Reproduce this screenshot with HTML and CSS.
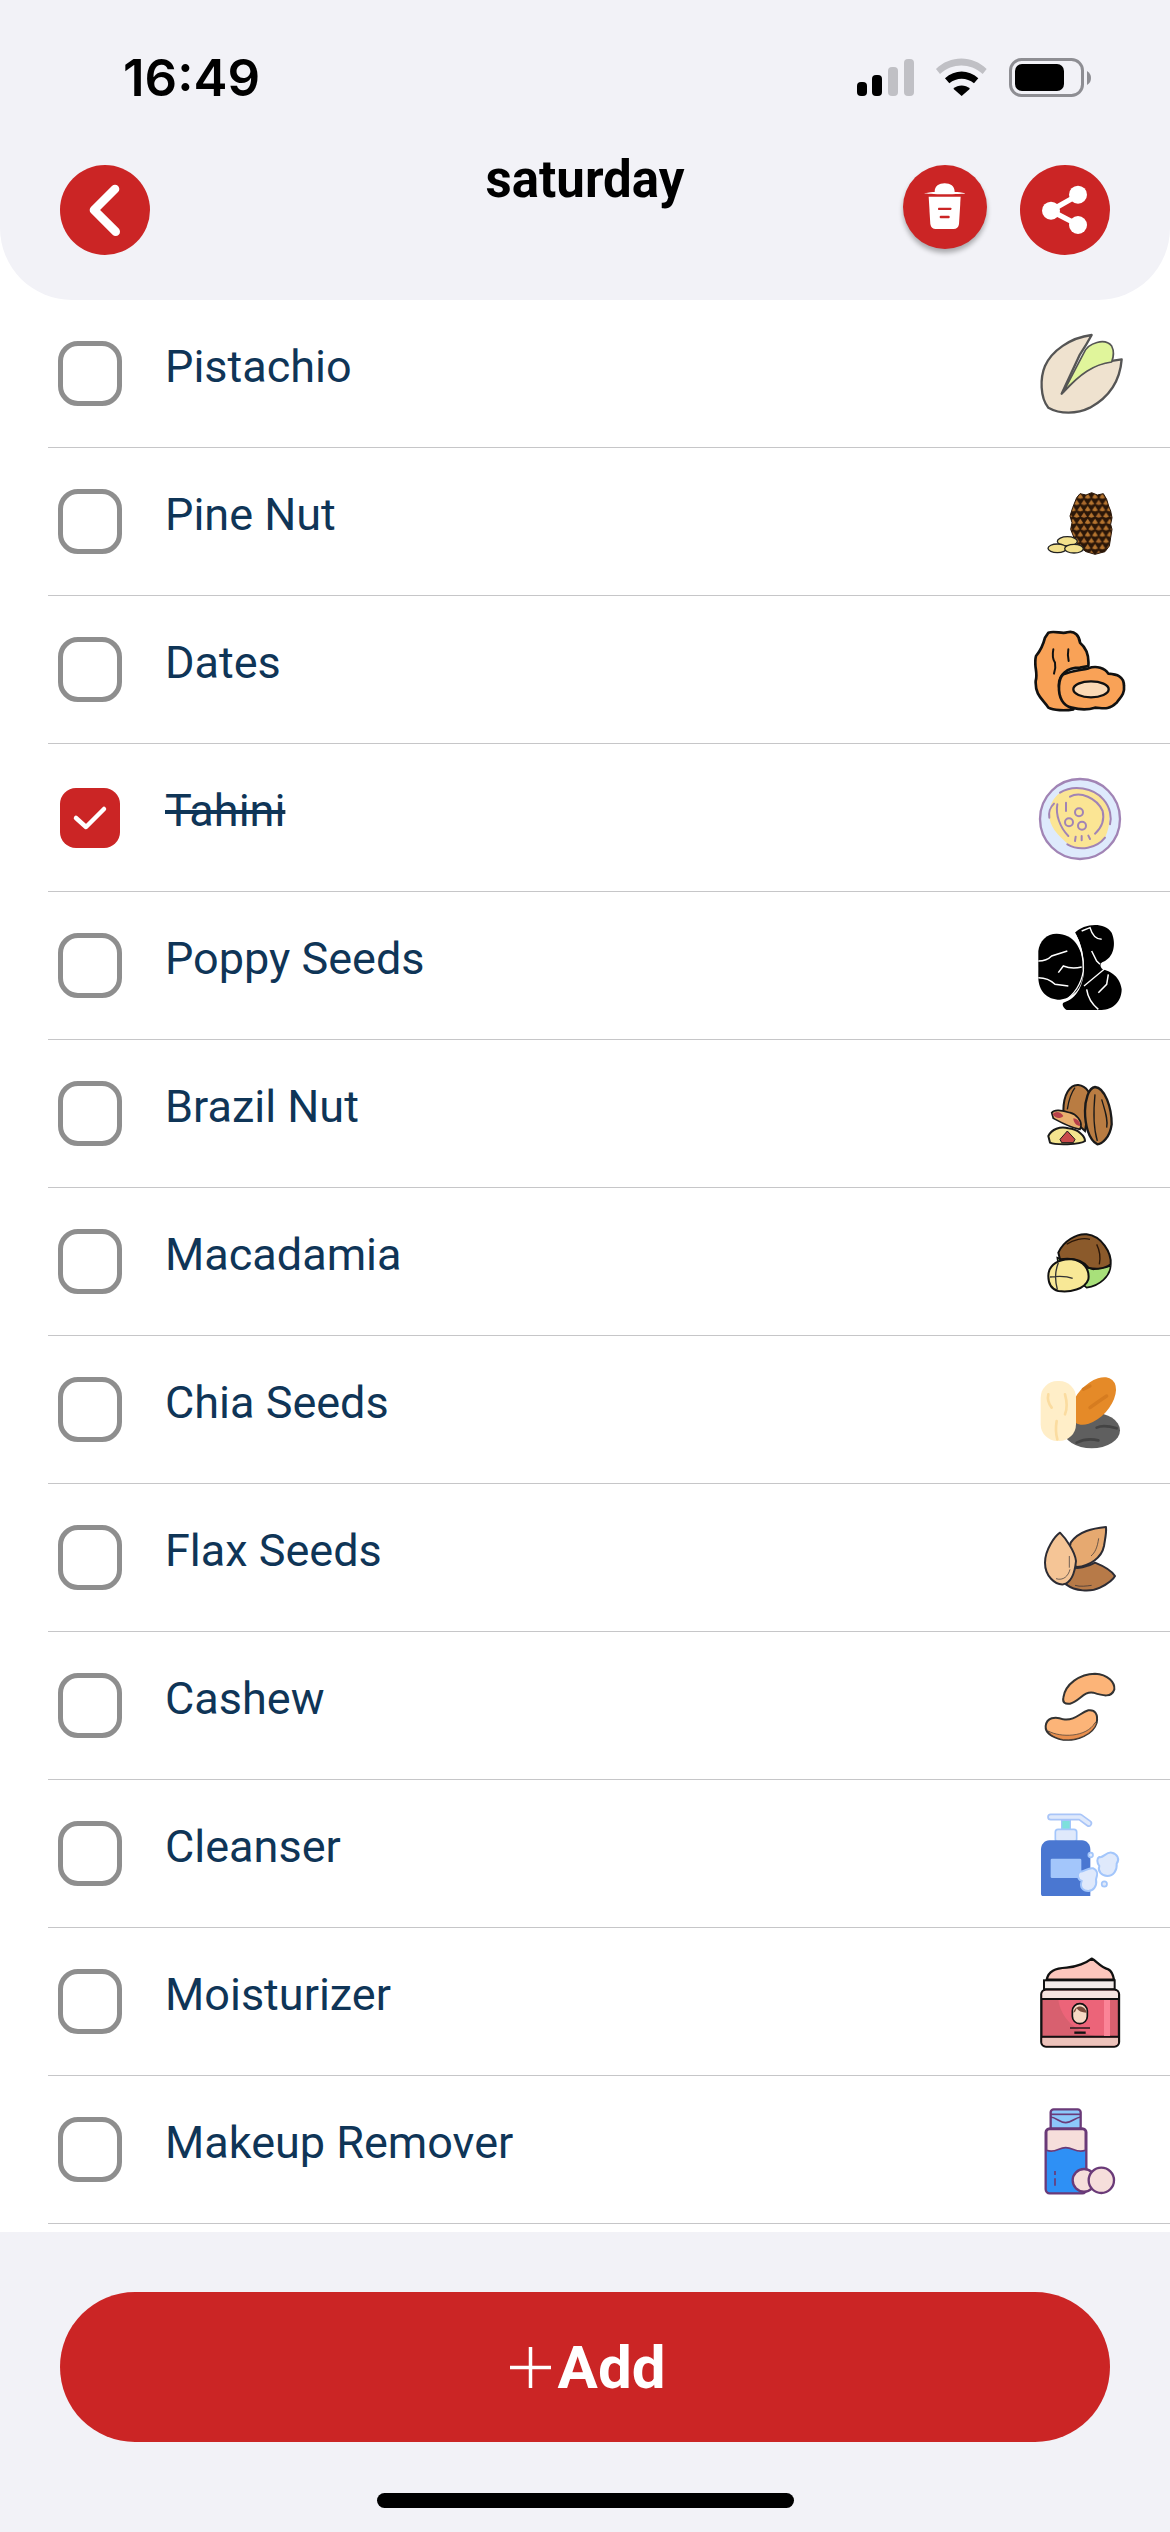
FILE: index.html
```html
<!DOCTYPE html>
<html lang="en">
<head>
<meta charset="utf-8">
<title>saturday</title>
<link rel="stylesheet" href="styles.css">
</head>
<body>
<div class="page">
  <header class="top">
    <div class="status">
      <span class="time">16:49</span>
      <svg class="status-icons" viewBox="850 57 245 42">
        <rect x="857" y="82" width="10" height="14" rx="4" fill="#000"/>
        <rect x="872" y="75" width="10" height="21" rx="4" fill="#000"/>
        <rect x="888" y="67" width="10" height="29" rx="4" fill="#c0c0c5"/>
        <rect x="904" y="59" width="10" height="37" rx="4" fill="#c0c0c5"/>
        <g transform="translate(880 40) scale(.3333)">
          <path d="M168 87C210 45 278 45 320 87L308 102C270 68 218 68 180 102Z" fill="#c0c0c5"/>
          <path d="M195 115C225 88 265 88 295 115L282 130C260 112 230 112 208 130Z" fill="#000"/>
          <path d="M220 146C235 133 255 133 270 146L245 168Z" fill="#000"/>
        </g>
        <rect x="1010.5" y="59.5" width="72" height="36" rx="11" fill="none" stroke="#8e8e93" stroke-width="3"/>
        <rect x="1015" y="64" width="49" height="27" rx="7" fill="#000"/>
        <path d="M1087 71C1090 73 1091 75 1091 78C1091 81 1090 83 1087 85Z" fill="#8e8e93"/>
      </svg>
    </div>
    <div class="nav">
      <button class="round back">
        <svg class="round-icon" viewBox="90 75 270 270"><path d="M255 147L192 210L257 275" fill="none" stroke="#fff" stroke-width="26" stroke-linecap="round" stroke-linejoin="round"/></svg>
      </button>
      <h1 class="title">saturday</h1>
      <div class="actions">
        <button class="round trash">
          <svg class="round-icon" viewBox="70 375 252 252">
            <path d="M134 460C150 457 158 456 165 456C165 438 178 430 195 430C212 430 225 438 225 456C235 456 245 457 257 460C257 464 134 464 134 460Z" fill="#fff"/>
            <path d="M147 470H243L238 552C237 562 230 567 222 567H168C160 567 153 562 152 552Z" fill="#fff"/>
            <rect x="175" y="503" width="40" height="7" rx="2" fill="#cb2525"/>
            <rect x="180" y="527" width="30" height="8" rx="3" fill="#cb2525"/>
          </svg>
        </button>
        <button class="round share">
          <svg class="round-icon" viewBox="420 375 270 270">
            <path d="M595 465L512 512L595 555" fill="none" stroke="#fff" stroke-width="16"/>
            <circle cx="594" cy="464" r="27" fill="#fff"/>
            <circle cx="513" cy="512" r="27" fill="#fff"/>
            <circle cx="594" cy="555" r="27" fill="#fff"/>
          </svg>
        </button>
      </div>
    </div>
  </header>

  <ul class="list">
    <li class="row">
      <span class="box"></span><span class="label">Pistachio</span>
      <svg class="thumb" viewBox="162 45 288 288">
        <path d="M245 248L300 130Q320 100 335 72C270 80 215 120 195 165C180 200 180 260 205 290C240 310 290 310 330 290C385 260 420 210 425 145C380 150 330 165 300 190Z" fill="#efe2cf" stroke="#555" stroke-width="7" stroke-linejoin="round"/>
        <path d="M250 243L312 125C325 95 375 80 395 105C405 125 400 140 395 153C340 160 300 190 250 243Z" fill="#e0f59b" stroke="#555" stroke-width="5" stroke-linejoin="round"/>
      </svg>
    </li>
    <li class="row">
      <span class="box"></span><span class="label">Pine Nut</span>
      <svg class="thumb" viewBox="162 489 288 288">
        <defs>
          <pattern id="cone" x="268" y="545" width="44" height="38" patternUnits="userSpaceOnUse">
            <rect width="44" height="38" fill="#2a1608"/>
            <path d="M2 15L11 2L20 15L11 18Z" fill="#b5742f"/>
            <path d="M24 15L33 2L42 15L33 18Z" fill="#b5742f"/>
            <path d="M-9 34L0 21L9 34L0 37Z" fill="#a8682c"/>
            <path d="M13 34L22 21L31 34L22 37Z" fill="#b5742f"/>
            <path d="M35 34L44 21L53 34L44 37Z" fill="#a8682c"/>
          </pattern>
        </defs>
        <path d="M290 560L300 548L318 552L335 545L352 552L370 548L380 565L386 585L392 600L396 620L392 640L396 655L392 680L388 705L375 722L345 730L318 722L295 705L282 680L272 655L276 635L270 615L278 590Z" fill="url(#cone)" stroke="#2a1608" stroke-width="3"/>
        <ellipse cx="262" cy="691" rx="30" ry="14" fill="#f2e08c" stroke="#222" stroke-width="4"/>
        <ellipse cx="232" cy="712" rx="28" ry="13" fill="#f2e08c" stroke="#222" stroke-width="4"/>
        <ellipse cx="282" cy="713" rx="28" ry="13" fill="#f2e08c" stroke="#222" stroke-width="4"/>
      </svg>
    </li>
    <li class="row">
      <span class="box"></span><span class="label">Dates</span>
      <svg class="thumb" viewBox="162 33 288 288">
        <path d="M205 65C225 58 245 70 262 64C285 58 298 75 300 95C318 110 328 130 325 165L300 170C262 170 235 190 237 225C240 260 255 280 280 295C255 300 220 298 205 290C190 265 165 255 167 210C175 185 160 165 168 135C185 115 190 100 195 80Z" fill="#f9a257" stroke="#111" stroke-width="8" stroke-linejoin="round"/>
        <path d="M250 190C275 180 300 178 325 172C350 162 375 172 385 188C410 190 432 195 432 225C435 250 420 260 410 275C385 300 365 290 345 290C320 298 295 295 275 290C250 285 235 260 237 225C238 210 240 198 250 190Z" fill="#f9a257" stroke="#111" stroke-width="8" stroke-linejoin="round"/>
        <ellipse cx="333" cy="235" rx="53" ry="24" fill="#fbd9b5" stroke="#111" stroke-width="7"/>
        <path d="M220 115Q215 140 225 155Q228 170 222 188M265 115Q262 130 266 150" fill="none" stroke="#111" stroke-width="6" stroke-linecap="round"/>
      </svg>
    </li>
    <li class="row done">
      <span class="box">
        <svg class="tick" viewBox="0 0 60 60"><path d="M16 30L26 39L44 21" fill="none" stroke="#fff" stroke-width="4.5" stroke-linecap="round" stroke-linejoin="round"/></svg>
      </span><span class="label">Tahini</span>
      <svg class="thumb" viewBox="162 477 288 288">
        <circle cx="300" cy="624" r="120" fill="#deeafc" stroke="#a184b5" stroke-width="7"/>
        <path d="M240 545C280 520 340 530 370 565C392 590 395 640 375 680C350 715 300 720 265 700C245 680 215 660 208 620C205 585 220 560 240 545Z" fill="#fbe594"/>
        <path d="M208 620C205 600 210 590 222 578M232 580C226 610 240 650 265 675M262 700C300 722 350 712 375 680M270 557C300 540 350 560 368 600C375 630 365 650 345 668M240 545C280 520 340 530 370 565C392 590 395 620 390 640M258 575V600M287 677L285 690M305 675V688M325 674L330 684" fill="none" stroke="#a184b5" stroke-width="6" stroke-linecap="round"/>
        <circle cx="297" cy="604" r="12" fill="none" stroke="#a184b5" stroke-width="6"/>
        <circle cx="267" cy="634" r="12" fill="none" stroke="#a184b5" stroke-width="6"/>
        <circle cx="306" cy="644" r="12" fill="none" stroke="#a184b5" stroke-width="6"/>
      </svg>
    </li>
    <li class="row">
      <span class="box"></span><span class="label">Poppy Seeds</span>
      <svg class="thumb" viewBox="162 921 288 288">
        <path d="M230 968C280 968 305 1010 310 1060C315 1110 295 1160 240 1166C200 1166 176 1140 175 1100V1020C178 990 200 968 230 968Z" fill="#000"/>
        <path d="M285 965C310 940 370 930 395 965C410 1000 400 1040 370 1052C360 1055 358 1065 368 1075C380 1078 420 1090 425 1135C425 1170 400 1197 365 1197H260C250 1190 245 1180 250 1175C290 1165 315 1120 312 1060C310 1020 300 990 285 965Z" fill="#000"/>
        <path d="M285 968Q312 1020 310 1080Q300 1140 250 1172M312 1125L388 1062" fill="none" stroke="#fff" stroke-width="4"/>
        <path d="M175 1050Q200 1050 215 1035L262 1020M235 1085L250 1065Q275 1075 305 1068M175 1100Q205 1100 225 1120L265 1125M305 960L330 950Q340 985 365 985M335 1020L350 1050L360 1060M320 1135Q325 1170 355 1195M385 1090L380 1120L355 1145" fill="none" stroke="#fff" stroke-width="4.5"/>
      </svg>
    </li>
    <li class="row">
      <span class="box"></span><span class="label">Brazil Nut</span>
      <svg class="thumb" viewBox="162 105 288 288">
        <path d="M250 240C250 190 270 160 295 162C320 165 335 190 330 210L315 300Z" fill="#b97c42" stroke="#1a1a1a" stroke-width="6"/>
        <path d="M345 168C375 170 395 230 395 280C390 320 365 340 352 340C325 325 315 280 315 240C315 210 325 170 345 168Z" fill="#b97c42" stroke="#1a1a1a" stroke-width="7"/>
        <path d="M345 190C340 240 340 290 352 330M365 205C375 240 385 265 380 290M285 170C270 190 265 215 262 235" fill="none" stroke="#1a1a1a" stroke-width="4"/>
        <path d="M215 245C225 232 250 240 270 245C290 250 305 270 303 285L300 295C270 290 235 270 220 262Z" fill="#e9b06e" stroke="#1a1a1a" stroke-width="5"/>
        <path d="M218 250C228 236 245 245 250 255C240 265 225 262 218 250ZM280 262C292 262 302 275 300 285C290 285 280 275 280 262Z" fill="#b8404a"/>
        <path d="M205 315C215 295 240 285 265 292C295 295 315 315 315 330C300 342 225 342 210 335Z" fill="#f4e48e" stroke="#1a1a1a" stroke-width="6"/>
        <path d="M240 325L262 300L285 325L280 335H245Z" fill="#c84a4a" stroke="#1a1a1a" stroke-width="3"/>
      </svg>
    </li>
    <li class="row">
      <span class="box"></span><span class="label">Macadamia</span>
      <svg class="thumb" viewBox="162 549 288 288">
        <path d="M232 680L235 700L320 770C360 765 390 735 392 705L340 715Z" fill="#a8e07a" stroke="#111" stroke-width="5"/>
        <path d="M235 665C250 630 290 607 320 610C365 615 395 665 392 700C375 715 345 715 325 710C310 690 280 680 240 685Z" fill="#8b5a2b" stroke="#111" stroke-width="6"/>
        <path d="M260 640C280 625 310 620 330 625M350 640C360 660 362 680 358 700" fill="none" stroke="#2a1608" stroke-width="4"/>
        <path d="M205 735C205 700 240 682 275 685C310 690 330 715 325 745C315 775 270 785 235 780C215 775 205 760 205 735Z" fill="#f8e896" stroke="#111" stroke-width="6"/>
        <path d="M235 695C225 720 225 750 232 775M210 738C235 735 260 735 278 742" fill="none" stroke="#333" stroke-width="4"/>
      </svg>
    </li>
    <li class="row">
      <span class="box"></span><span class="label">Chia Seeds</span>
      <svg class="thumb" viewBox="162 993 288 288">
        <ellipse cx="335" cy="1198" rx="85" ry="54" fill="#5f5f5f"/>
        <path d="M350 1190Q370 1180 410 1192M290 1235Q320 1220 355 1228" fill="none" stroke="#444" stroke-width="8" stroke-linecap="round"/>
        <ellipse cx="340" cy="1110" rx="50" ry="85" fill="#e58a28" transform="rotate(42 340 1110)"/>
        <path d="M310 1075L330 1065M330 1130Q350 1115 380 1095" fill="none" stroke="#d67c20" stroke-width="10" stroke-linecap="round"/>
        <rect x="182" y="1050" width="106" height="180" rx="50" fill="#ffeec8"/>
        <path d="M205 1090Q200 1110 215 1130M255 1090Q265 1125 255 1150M230 1170Q225 1200 232 1225" fill="none" stroke="#fbdca0" stroke-width="8" stroke-linecap="round"/>
      </svg>
    </li>
    <li class="row">
      <span class="box"></span><span class="label">Flax Seeds</span>
      <svg class="thumb" viewBox="162 177 288 288">
        <path d="M378 228C340 232 295 240 272 275C265 305 265 335 290 348C330 345 365 320 372 285C375 265 380 245 378 228Z" fill="#e6a970" stroke="#2c2c34" stroke-width="6" stroke-linejoin="round"/>
        <path d="M345 335C320 350 290 352 285 350L258 400C285 420 330 425 360 410C380 400 400 385 405 375C395 360 370 345 345 335Z" fill="#b77a48" stroke="#2c2c34" stroke-width="6" stroke-linejoin="round"/>
        <path d="M240 245C225 255 195 295 195 335C195 375 225 402 250 400C275 395 285 360 288 330C285 300 255 260 240 245Z" fill="#f5c596" stroke="#2c2c34" stroke-width="6" stroke-linejoin="round"/>
        <path d="M268 315V350M228 383C250 390 265 375 270 355M285 403C300 408 320 405 335 403M333 315C345 305 352 290 356 262" fill="none" stroke="#2c2c34" stroke-width="2"/>
      </svg>
    </li>
    <li class="row">
      <span class="box"></span><span class="label">Cashew</span>
      <svg class="thumb" viewBox="162 621 288 288">
        <path d="M250 740C255 700 300 668 345 668C385 670 405 695 403 715C395 740 370 735 340 725C310 720 300 750 270 758C255 760 247 755 250 740Z" fill="#fcb478" stroke="#333" stroke-width="6"/>
        <path d="M197 825C200 800 225 795 250 805C285 810 300 785 325 778C345 775 355 790 350 815C340 850 290 870 250 866C220 860 195 850 197 825Z" fill="#fcb478" stroke="#333" stroke-width="6"/>
        <path d="M205 840C240 860 320 860 345 815L350 815C340 850 290 870 250 866C225 860 210 852 205 840Z" fill="#e88f4e" stroke="#333" stroke-width="2"/>
      </svg>
    </li>
    <li class="row">
      <span class="box"></span><span class="label">Cleanser</span>
      <svg class="thumb" viewBox="162 75 288 288">
        <path d="M212 108H300L326 127" fill="none" stroke="#a9c5f8" stroke-width="21" stroke-linecap="round" stroke-linejoin="round"/>
        <path d="M212 108H300L326 127" fill="none" stroke="#dfe9fb" stroke-width="11" stroke-linecap="round" stroke-linejoin="round"/>
        <rect x="245" y="118" width="26" height="30" fill="#7de0dc" stroke="#a3c6fb" stroke-width="4"/>
        <rect x="226" y="145" width="64" height="38" rx="8" fill="#dfe9fb" stroke="#a3c6fb" stroke-width="5"/>
        <path d="M208 178H306C320 178 331 190 331 205V345H190C185 345 183 343 183 338V205C183 190 194 178 208 178Z" fill="#4a77d1"/>
        <rect x="212" y="233" width="92" height="58" rx="4" fill="#a3c6fb"/>
        <circle cx="332" cy="222" r="7" fill="#dfe9fb" stroke="#a3c6fb" stroke-width="5"/>
        <circle cx="373" cy="309" r="8" fill="#dfe9fb" stroke="#a3c6fb" stroke-width="5"/>
        <path d="M300 272C315 272 325 258 340 262C355 268 352 285 348 295C352 315 340 330 325 330C310 330 298 320 305 300C292 295 290 278 300 272Z" fill="#dfe9fb" stroke="#a3c6fb" stroke-width="6"/>
        <path d="M358 228C370 232 378 212 395 215C412 218 420 235 410 248C412 268 400 285 382 285C365 285 352 270 358 255C350 245 350 232 358 228Z" fill="#dfe9fb" stroke="#a3c6fb" stroke-width="6"/>
      </svg>
    </li>
    <li class="row">
      <span class="box"></span><span class="label">Moisturizer</span>
      <svg class="thumb" viewBox="162 519 288 288">
        <path d="M200 596C205 570 225 562 260 560C290 558 320 545 335 533C350 540 360 558 385 565C395 570 400 585 402 596Z" fill="#fcc6bd" stroke="#111" stroke-width="7" stroke-linejoin="round"/>
        <rect x="192" y="598" width="212" height="27" fill="#f3ecea" stroke="#111" stroke-width="6"/>
        <rect x="184" y="626" width="233" height="171" rx="14" fill="#d8606f" stroke="#111" stroke-width="7"/>
        <path d="M187 652V640C187 632 192 629 198 629H403C409 629 414 632 414 640V652Z" fill="#f6e5e1"/>
        <path d="M187 770V784C187 790 192 794 198 794H403C409 794 414 790 414 784V770Z" fill="#ecc3bb"/>
        <path d="M235 655C240 710 290 755 345 765H372V655Z" fill="#ec6479"/>
        <path d="M185 654H416M185 767H416" stroke="#111" stroke-width="6"/>
        <rect x="372" y="657" width="18" height="108" fill="#fb8497"/>
        <rect x="277" y="668" width="45" height="60" rx="22" fill="#f7d8c4" stroke="#111" stroke-width="5"/>
        <path d="M280 695C285 670 315 670 320 695C305 695 295 690 290 682C287 690 285 695 280 695Z" fill="#7a4b3c"/>
        <path d="M270 741H330" stroke="#111" stroke-width="4"/>
        <path d="M283 755H317" stroke="#111" stroke-width="7"/>
      </svg>
    </li>
    <li class="row">
      <span class="box"></span><span class="label">Makeup Remover</span>
      <svg class="thumb" viewBox="162 963 288 288">
        <rect x="212" y="985" width="90" height="62" rx="9" fill="#8cc8fa" stroke="#6a3a78" stroke-width="7"/>
        <path d="M212 1000H302" stroke="#6a3a78" stroke-width="5"/>
        <path d="M212 1008C230 1010 240 1025 257 1025C275 1025 285 1010 302 1008" fill="none" stroke="#6a3a78" stroke-width="5"/>
        <rect x="197" y="1042" width="122" height="195" rx="12" fill="#2e90f5" stroke="#6a3a78" stroke-width="7"/>
        <path d="M200 1108V1052C200 1047 203 1045 208 1045H308C313 1045 316 1047 316 1052V1108C290 1118 280 1100 257 1100C235 1100 225 1118 200 1108Z" fill="#f6dedb" stroke="#6a3a78" stroke-width="5"/>
        <path d="M225 1170V1182M225 1192V1214" stroke="#6a3a78" stroke-width="5"/>
        <circle cx="312" cy="1198" r="34" fill="#f6dedb" stroke="#6a3a78" stroke-width="7"/>
        <circle cx="364" cy="1198" r="38" fill="#f6dedb" stroke="#6a3a78" stroke-width="7"/>
      </svg>
    </li>
  </ul>

  <footer class="bottom">
    <button class="add">
      <svg class="plus" viewBox="0 0 41 41"><path d="M20.5 0V41M0 20.5H41" stroke="#fff" stroke-width="3.5"/></svg>
      <span class="add-text">Add</span>
    </button>
    <div class="home"></div>
  </footer>
</div>
</body>
</html>
```

FILE: styles.css
```css
* { box-sizing: border-box; }
html, body { margin: 0; padding: 0; background: #fff; }
.page {
  width: 1170px;
  height: 2532px;
  display: flex;
  flex-direction: column;
  overflow: hidden;
  font-family: Roboto, "Liberation Sans", sans-serif;
}
.top {
  height: 300px;
  flex: none;
  background: #f2f2f7;
  border-radius: 0 0 72px 72px;
}
.status {
  height: 165px;
  display: flex;
  justify-content: space-between;
  align-items: flex-start;
  padding: 57px 75px 0 123px;
}
.time {
  font-family: Inter, "Liberation Sans", sans-serif;
  font-weight: 600;
  font-size: 51px;
  line-height: 42px;
  color: #000;
}
.status-icons { width: 245px; height: 42px; display: block; }
.nav {
  display: grid;
  grid-template-columns: 1fr auto 1fr;
  padding: 0 60px;
}
.round {
  border: 0;
  padding: 0;
  width: 90px;
  height: 90px;
  border-radius: 50%;
  background: #cb2525;
  display: block;
}
.round-icon { width: 100%; height: 100%; display: block; }
.trash {
  width: 84px;
  height: 84px;
  box-shadow: 0 4px 5px rgba(0, 0, 0, .3);
}
.title {
  margin: -20px 0 0;
  font-size: 51px;
  line-height: 70px;
  font-weight: 700;
  color: #000;
}
.actions { display: flex; gap: 33px; align-items: flex-start; justify-content: flex-end; }
.list {
  flex: 1;
  margin: 0;
  padding: 0;
  list-style: none;
  overflow: hidden;
}
.row {
  height: 148px;
  margin-left: 48px;
  padding: 0 40px 0 10px;
  display: flex;
  align-items: center;
  border-bottom: 1px solid #c6c6c8;
}
.box {
  width: 64px;
  height: 65px;
  flex: none;
  border: 5px solid #8e8e8e;
  border-radius: 20px;
}
.label {
  flex: 1;
  margin-left: 43px;
  padding-bottom: 14px;
  font-size: 45px;
  line-height: 56px;
  color: #0f3557;
}
.thumb { width: 96px; height: 96px; flex: none; display: block; }
.done .box {
  width: 60px;
  height: 60px;
  margin: 0 2px;
  border: 0;
  border-radius: 16px;
  background: #cb2525;
}
.tick { width: 60px; height: 60px; display: block; }
.done .label { text-decoration: line-through; }
.bottom {
  height: 300px;
  flex: none;
  background: #f2f2f7;
  padding: 60px 60px 0;
}
.add {
  width: 1050px;
  height: 150px;
  border: 0;
  padding: 0 0 0 5px;
  border-radius: 75px;
  background: #cb2525;
  display: flex;
  align-items: center;
  justify-content: center;
  gap: 7px;
}
.plus { width: 41px; height: 41px; display: block; }
.add-text {
  font-family: Roboto, "Liberation Sans", sans-serif;
  font-size: 60px;
  font-weight: 700;
  color: #fff;
}
.home {
  width: 417px;
  height: 15px;
  margin: 51px auto 0 317px;
  border-radius: 8px;
  background: #000;
}
```
